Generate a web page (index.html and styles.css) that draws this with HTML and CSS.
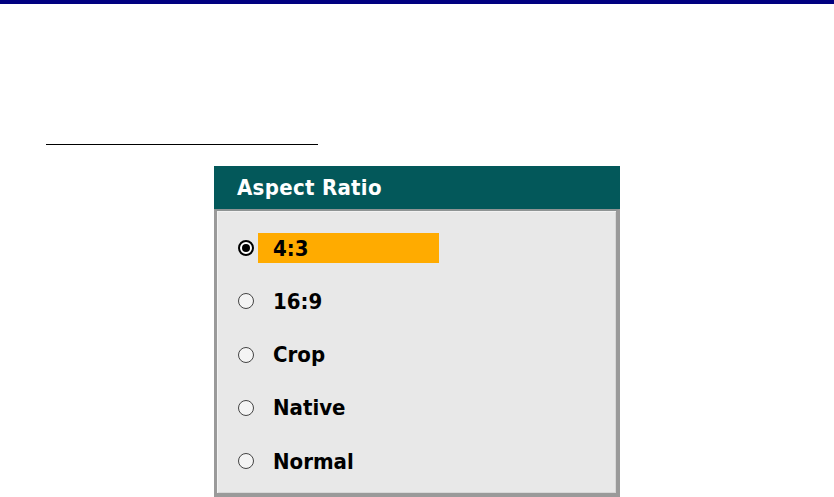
FILE: index.html
```html
<!DOCTYPE html>
<html>
<head>
<meta charset="utf-8">
<link rel="stylesheet" href="styles.css">
</head>
<body>
<div class="topbar"></div>
<div class="rule"></div>
<div class="dialog">
  <div class="dialog-head">Aspect Ratio</div>
  <div class="dialog-body">
    <div class="row"><span class="radio checked"></span><span class="label selected">4:3</span></div>
    <div class="row"><span class="radio"></span><span class="label">16:9</span></div>
    <div class="row"><span class="radio"></span><span class="label">Crop</span></div>
    <div class="row"><span class="radio"></span><span class="label">Native</span></div>
    <div class="row"><span class="radio"></span><span class="label">Normal</span></div>
  </div>
</div>
</body>
</html>
```
FILE: styles.css
```css
html, body {
  margin: 0;
  padding: 0;
  height: 497px;
  overflow: hidden;
  background: #ffffff;
}
body {
  font-family: "DejaVu Sans Condensed", "DejaVu Sans", sans-serif;
  font-stretch: condensed;
}
.topbar {
  height: 4px;
  background: #000080;
}
.rule {
  margin-top: 140px;
  margin-left: 46px;
  width: 272px;
  height: 1px;
  background: #000000;
}
.dialog {
  margin-top: 21px;
  margin-left: 214px;
  width: 406px;
}
.dialog-head {
  height: 43px;
  background: #03585a;
  color: #ffffff;
  font-weight: bold;
  font-size: 22px;
  letter-spacing: 0.3px;
  display: flex;
  align-items: center;
  padding-left: 23px;
  box-sizing: border-box;
}
.dialog-body {
  background: #e8e8e8;
  border-top: 2px solid #8f9494;
  border-left: 3px solid #9a9a9a;
  border-right: 4px solid #9a9a9a;
  border-bottom: 4px solid #9a9a9a;
  box-shadow: inset 1px 1px 0 #f2f2f2, inset -1px -1px 0 #d8d8d8;
  height: 288px;
  box-sizing: border-box;
  padding: 22px 0 17px 20.5px;
  display: flex;
  flex-direction: column;
  gap: 23.25px;
}
.row {
  height: 30px;
  display: flex;
  align-items: center;
}
.radio {
  width: 16px;
  height: 16px;
  box-sizing: border-box;
  border-radius: 50%;
  border: 1.5px solid #444444;
  background: #f4f4f4;
  margin-right: 4.5px;
  position: relative;
  flex: none;
}
.radio.checked {
  border: 2px solid #000000;
  background: #ffffff;
}
.radio.checked::after {
  content: "";
  position: absolute;
  left: 2px;
  top: 2px;
  width: 8px;
  height: 8px;
  border-radius: 50%;
  background: #000000;
}
.label {
  height: 30px;
  display: flex;
  align-items: center;
  padding-left: 15px;
  box-sizing: border-box;
  font-weight: bold;
  font-size: 22px;
  color: #000000;
}
.label.selected {
  width: 181px;
  background: #ffab00;
}
```
